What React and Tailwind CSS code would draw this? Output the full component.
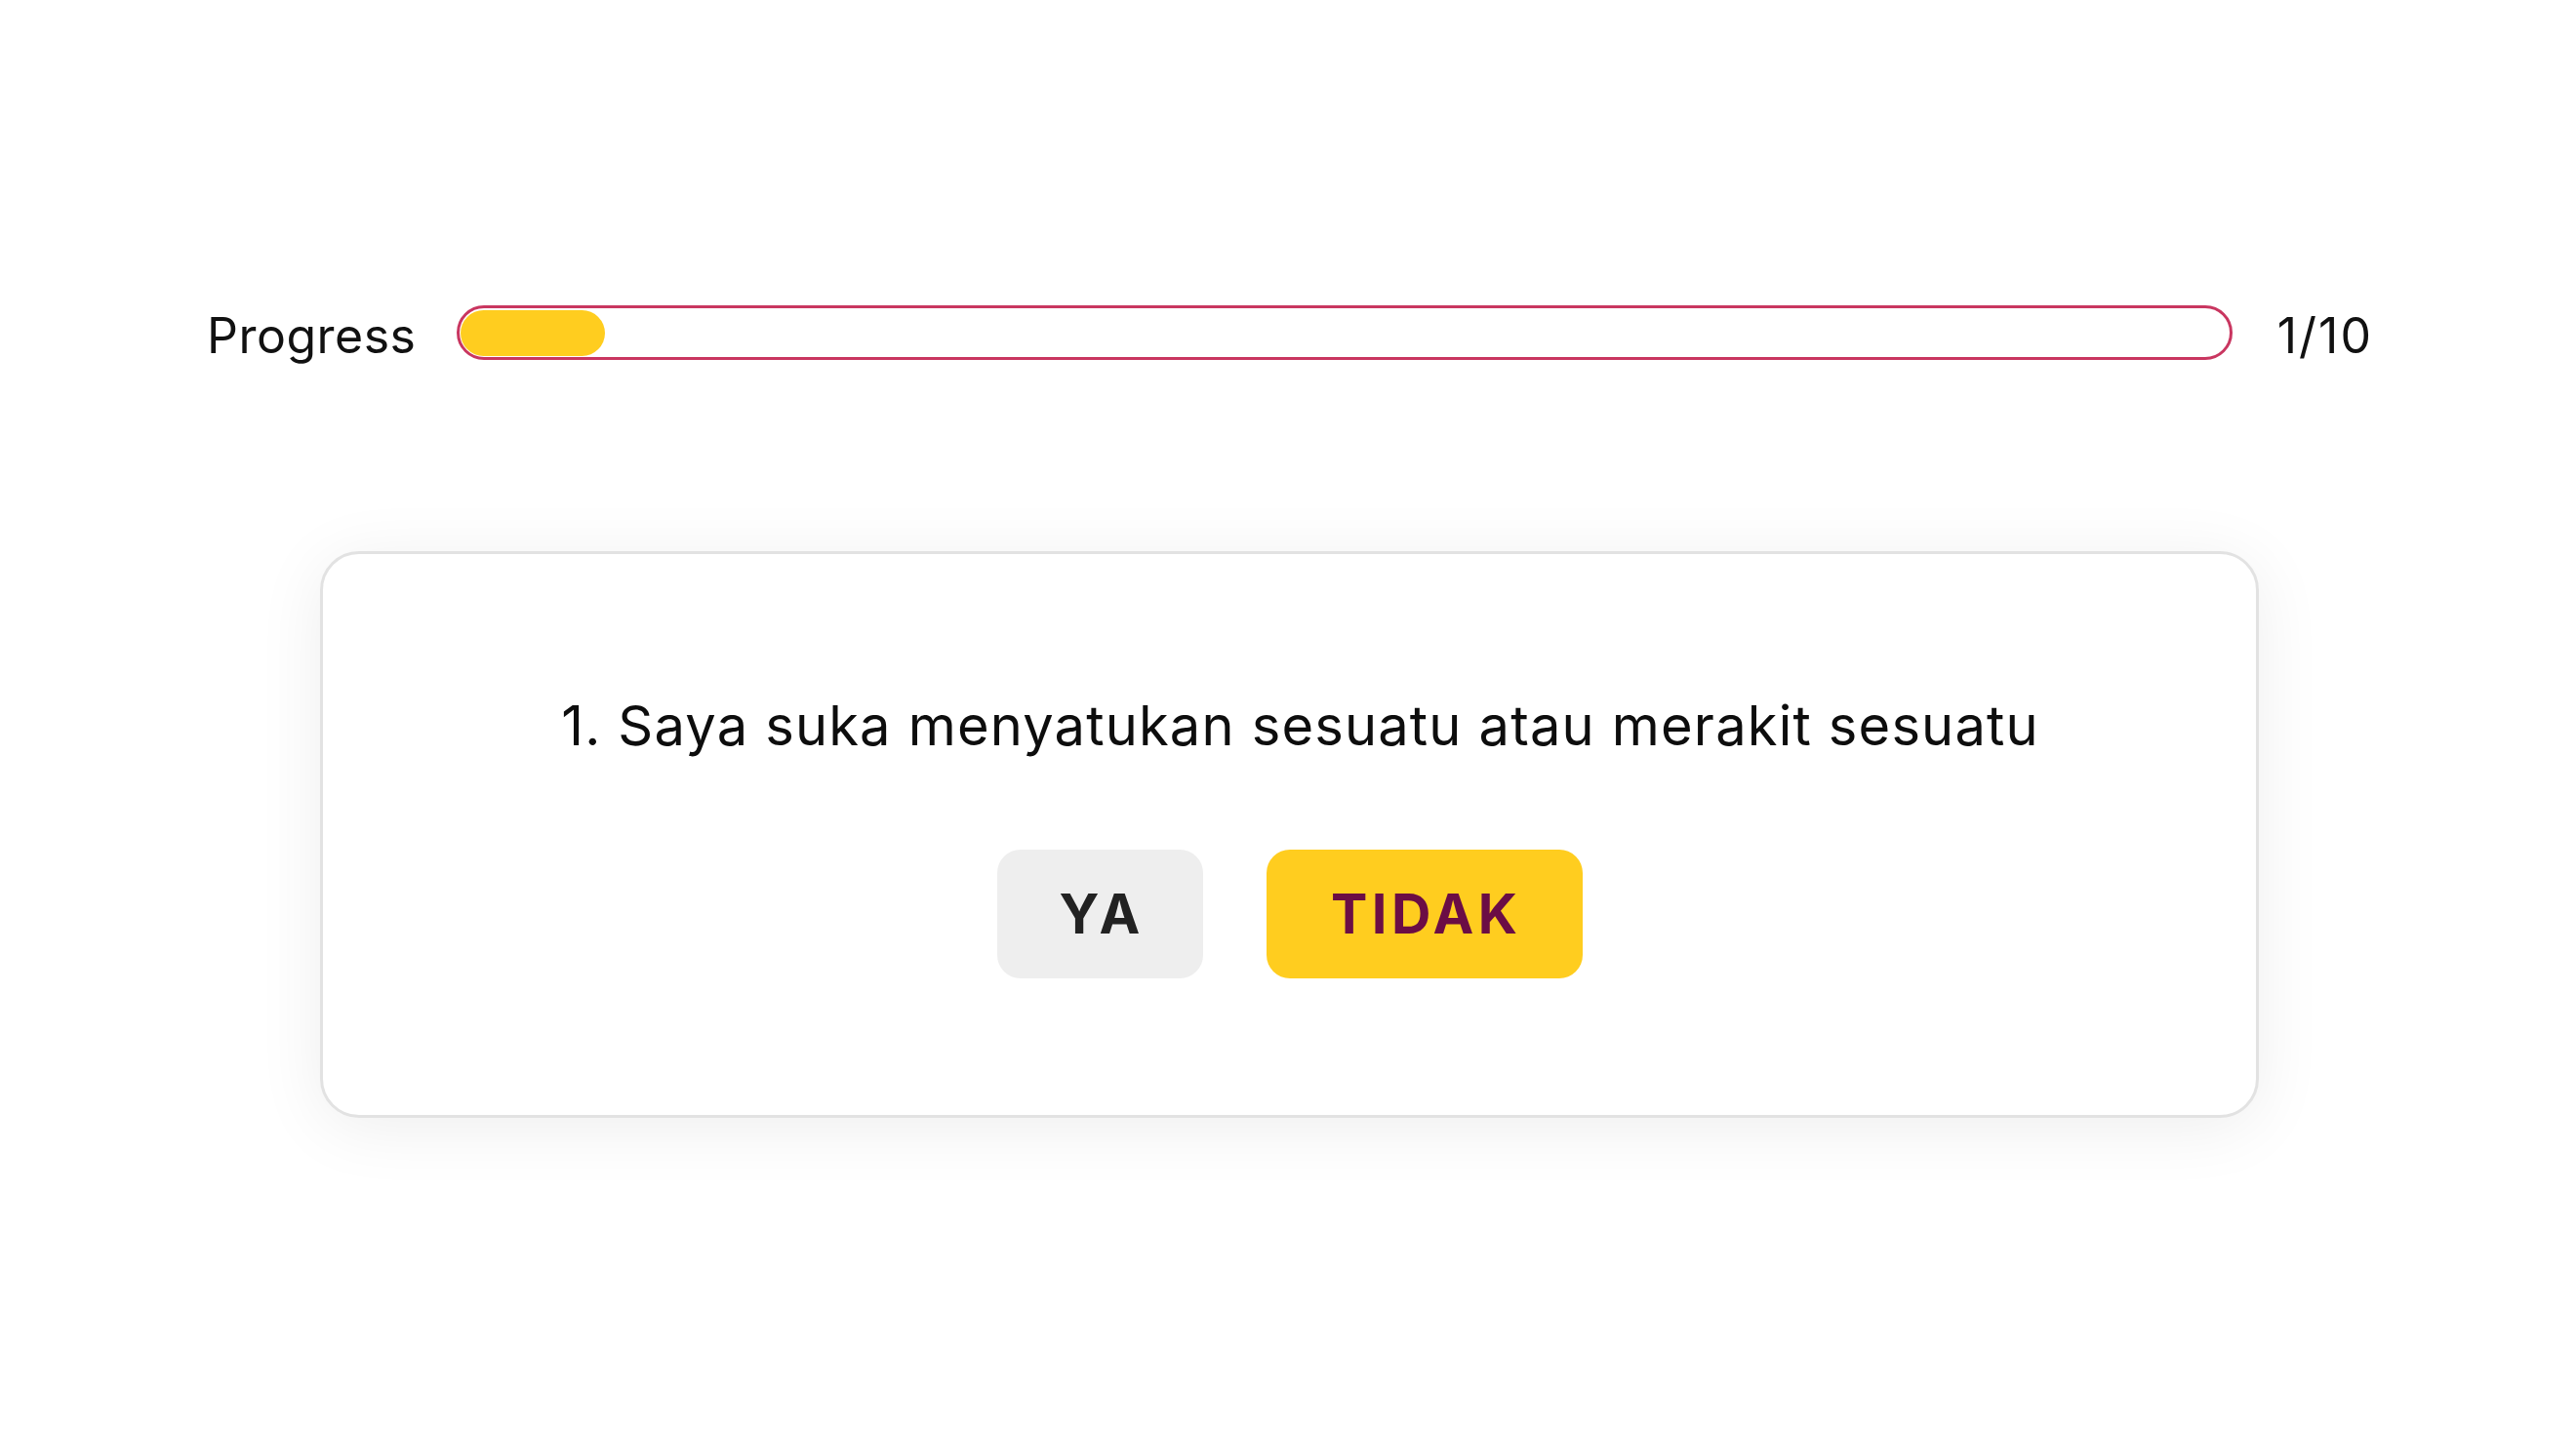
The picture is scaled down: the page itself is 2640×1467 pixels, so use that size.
export default function App() {
  return (
    <div
      className="min-h-[1467px] w-full bg-white text-[#111111]"
      style={{ fontFamily: "Inter, 'Noto Sans', sans-serif" }}
    >
      <div className="flex items-start pl-[212px] pr-[208px] pt-[313px]">
        <span className="mt-[3px] text-[50px] leading-[56px] tracking-[0.01em]">Progress</span>
        <div className="ml-[41px] mr-[46px] flex h-[56px] flex-1 items-center rounded-full border-[3px] border-[#c93660] pl-[1px]">
          <div className="h-[47px] w-[148px] rounded-full bg-[#ffcd1f]" />
        </div>
        <span className="mt-[3px] text-[50px] leading-[56px] tracking-[0.04em]">1/10</span>
      </div>

      <div className="mt-[193px] flex justify-center pl-[3px]">
        <div className="flex w-[1987px] flex-col items-center rounded-[40px] border-[3px] border-[#e2e2e2] bg-white pb-[140px] pt-[142px] shadow-[0_10px_70px_rgba(0,0,0,0.07)]">
          <p className="pl-[22px] text-[56px] leading-[68px] tracking-[0.021em] text-[#0d0d0d]">
            1. Saya suka menyatukan sesuatu atau merakit sesuatu
          </p>
          <div className="mt-[93px] flex gap-[65px]">
            <button className="flex h-[132px] w-[211px] items-center justify-center rounded-[24px] bg-[#eeeeee] pl-[0.08em] text-[56px] font-bold tracking-[0.08em] text-[#222222]">
              YA
            </button>
            <button className="flex h-[132px] w-[324px] items-center justify-center rounded-[24px] bg-[#ffcd1f] pl-[0.08em] text-[56px] font-bold tracking-[0.08em] text-[#6b0d45]">
              TIDAK
            </button>
          </div>
        </div>
      </div>
    </div>
  );
}
